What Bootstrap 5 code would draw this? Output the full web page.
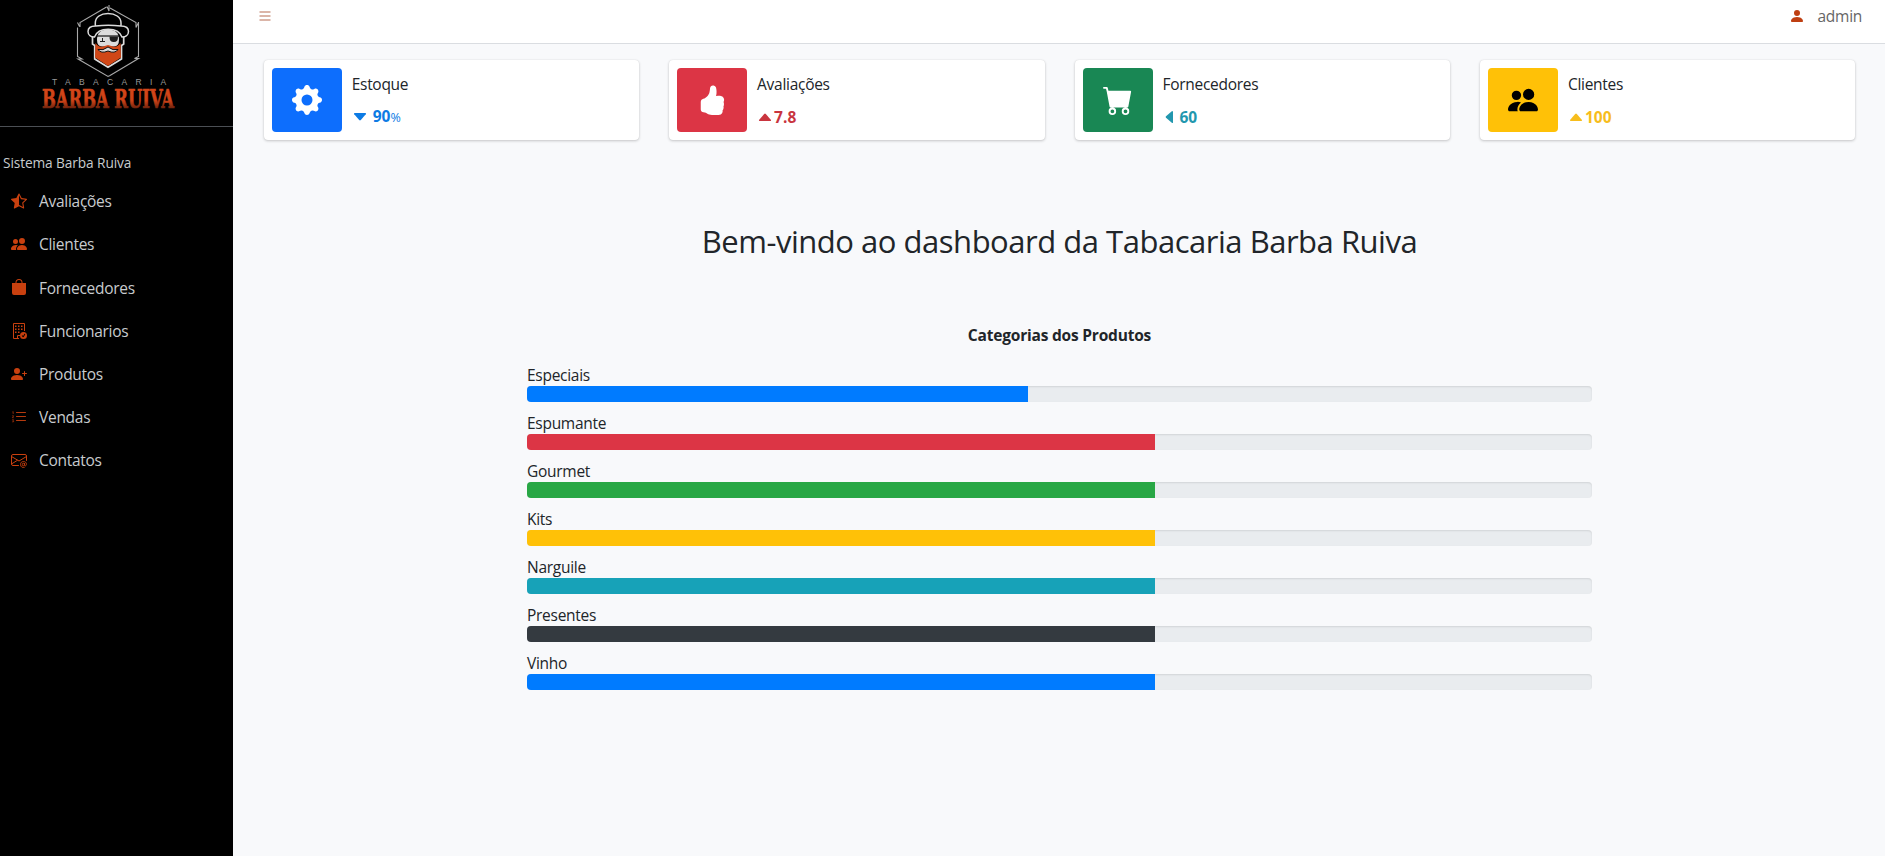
<!DOCTYPE html>
<html lang="pt-BR">
<head>
<meta charset="utf-8">
<meta name="viewport" content="width=device-width, initial-scale=1">
<title>Tabacaria Barba Ruiva</title>
<link href="https://cdn.jsdelivr.net/npm/bootstrap@5.3.0/dist/css/bootstrap.min.css" rel="stylesheet">
<style>
  body { font-family: "Open Sans", "Noto Sans", sans-serif; font-size: 15.5px; line-height: 24px; letter-spacing: -.28px; color: #212529; background: #f8f9fb; }
  .side { width: 233px; background: #000; color: #c8cbce; }
  .brand-box { height: 127px; border-bottom: 1px solid #4b4f54; }
  .side-title { font-size: 13.7px; letter-spacing: -.1px; padding: 24px 0 0 3px; height: 53px; }
  .side-link { height: 43.2px; padding-left: 11px; gap: 12px; color: #c8cbce; }
  .side-link svg { color: #c8400f; margin-top: -1px; }
  .side-link span { margin-top: -.6px; }
  .topbar { height: 44px; border-bottom: 1px solid #dadde1; padding: 4px 23px 0 26px; }
  .topbar .user { color: #666; gap: 13px; }
  .stats { padding: 16px 29.7px 0 30.7px; }
  .stats .row { --bs-gutter-x: 30px; }
  .info { height: 80px; padding: 8px; border-radius: 4px; background: #fff; box-shadow: 0 0 1px rgba(0,0,0,.125), 0 1px 3px rgba(0,0,0,.2); }
  .info-icon { width: 70px; border-radius: 4px; }
  .info-body { padding: 4px 10px 0; }
  .info-num { height: 24px; margin-top: 9px; font-weight: 700; letter-spacing: 0; }
  .info-num small { font-size: 12.5px; font-weight: 400; letter-spacing: -.3px; }
  .c-blue { color: #0d7be4; } .c-red { color: #c9353f; } .c-teal { color: #2297ae; } .c-gold { color: #f7bd1c; }
  .welcome { font-size: 31px; line-height: 38px; letter-spacing: -.48px; margin: 82px 0 0; }
  .cats { width: 1065px; margin-left: 294px; }
  .cats-title { margin: 63px 0 15px; letter-spacing: -.2px; }
  .cat-label { height: 24px; line-height: 27px; }
  .progress { height: 16px; border-radius: 4px; background: #e9ecef; box-shadow: inset 0 1px 2px rgba(0,0,0,.1); margin-bottom: 8px; }
  .bg-b { background: #007bff; } .bg-r { background: #dc3545; } .bg-g { background: #28a745; } .bg-y { background: #ffc107; }
  .bg-t { background: #17a2b8; } .bg-k { background: #343a40; }
</style>
</head>
<body>
<svg width="0" height="0" class="position-absolute" aria-hidden="true">
  <symbol id="people" viewBox="0 0 16 16"><path d="M7 14s-1 0-1-1 1-4 5-4 5 3 5 4-1 1-1 1H7zm4-6a3 3 0 1 0 0-6 3 3 0 0 0 0 6z"/><path d="M5.216 14A2.238 2.238 0 0 1 5 13c0-1.355.68-2.75 1.936-3.72A6.325 6.325 0 0 0 5 9c-4 0-5 3-5 4s1 1 1 1h4.216zM4.5 8a2.5 2.5 0 1 0 0-5 2.5 2.5 0 0 0 0 5z"/></symbol>
</svg>
<div class="d-flex vh-100 overflow-hidden">
  <aside class="side flex-shrink-0">
    <div class="brand-box">
      <svg class="d-block" width="216" height="120" viewBox="0 0 216 120">
        <defs><linearGradient id="fire" x1="0" y1="0" x2="0" y2="1"><stop offset="0" stop-color="#d8481a"/><stop offset=".6" stop-color="#cc4217"/><stop offset=".85" stop-color="#6a220d"/></linearGradient></defs>
        <g fill="none" stroke="#a9a9a9" stroke-width="1.1">
          <path d="M110 8 136 22.500v5M138.500 22v34.500l-4 2h4L110 75.500 108 76.500 78 59h4l-4.500-2.500V27.500M80 27V22.500L106.500 7M109 5v6l-2-4.500M77.500 22.500l2 4M138.500 22.500l-2.500 5"/>
        </g>
        <path d="M92.500 36v8l2.200 1.500V59L108 67.300 121.500 59V45.500l2.200-1.500v-8" fill="#000" stroke="#dcdcdc" stroke-width="1.700"/>
        <path d="M97 40q0-10.500 11-10.500T119 40q0 6-5 6.500h-12Q97 46 97 40z" fill="#dcdcdc"/>
        <g stroke="#dcdcdc" fill="#000" stroke-width="1.500">
          <path d="M95.300 27V23c0-6 5.500-9.500 12.700-9.500S121 17 121 23v4"/>
          <path d="M95.500 26C91 26 88 28 88 31.500c0 3.500 3 5.500 6.500 5.500 2-5.500 7-7.800 13.700-7.800s11.800 2.300 13.800 7.800c3.500 0 6.500-2 6.500-5.500 0-3.500-3-5.500-7.500-5.500-8-.8-17.500-.8-25.500 0z"/>
        </g>
        <path d="M95.500 43q3 4.500 7.500 3.500l5-1.500 5 1.500q4.500 1 7.500-3.500l.5 14.500L108 66 95 57.500z" fill="#d04717"/>
        <path d="M98 49.500q5 1.500 10-2.500 5 4 10 2.500-3 4.500-10 1.500-7 3-10-1.500z" fill="#ddd" stroke="#111"/>
        <path d="M97 36h22" stroke="#111" stroke-width="1.200"/>
        <path d="M109.500 36.500h8.500q.3 5.500-4.200 5.500t-4.300-5.500z" fill="#1c1c1c"/>
        <path d="M100 41.500h5M102.500 38v3" stroke="#222" stroke-width="1" fill="none"/>
        <text x="52" y="85" textLength="114" font-family="Liberation Sans" font-size="8.500" fill="#999">TABACARIA</text>
        <g transform="translate(42 107.500) scale(1 1.450)"><text x="0" y="0" textLength="132" lengthAdjust="spacingAndGlyphs" font-family="DejaVu Serif, serif" font-weight="700" font-size="18.500" letter-spacing="0" fill="url(#fire)" stroke="url(#fire)" stroke-width=".5">BARBA RUIVA</text></g>
      </svg>
    </div>
    <div class="side-title">Sistema Barba Ruiva</div>
    <nav class="nav flex-column">
      <a class="side-link d-flex align-items-center text-decoration-none" href="#"><svg width="16" height="16" viewBox="0 0 16 16" fill="currentColor"><path d="M5.354 5.119 7.538.792A.516.516 0 0 1 8 .5c.183 0 .366.097.465.292l2.184 4.327 4.898.696A.537.537 0 0 1 16 6.320a.548.548 0 0 1-.17.445l-3.523 3.356.83 4.730c.078.443-.36.79-.746.592L8 13.187l-4.389 2.256a.52.52 0 0 1-.146.05c-.342.06-.668-.254-.6-.642l.83-4.730L.173 6.765a.55.55 0 0 1-.172-.403.58.58 0 0 1 .085-.302.513.513 0 0 1 .37-.245l4.898-.696zM8 12.027a.5.5 0 0 1 .232.056l3.686 1.894-.694-3.957a.565.565 0 0 1 .162-.505l2.907-2.770-4.052-.576a.525.525 0 0 1-.393-.288L8.001 2.223 8 2.226v9.800z"/></svg><span>Avaliações</span></a>
      <a class="side-link d-flex align-items-center text-decoration-none" href="#"><svg width="16" height="16" fill="currentColor"><use href="#people"/></svg><span>Clientes</span></a>
      <a class="side-link d-flex align-items-center text-decoration-none" href="#"><svg width="16" height="16" viewBox="0 0 16 16" fill="currentColor"><path d="M8 1a2.500 2.500 0 0 1 2.500 2.500V4h-5v-.5A2.500 2.500 0 0 1 8 1zm3.500 3v-.5a3.500 3.500 0 1 0-7 0V4H1v10a2 2 0 0 0 2 2h10a2 2 0 0 0 2-2V4h-3.500z"/></svg><span>Fornecedores</span></a>
      <a class="side-link d-flex align-items-center text-decoration-none" href="#"><svg width="16" height="16" viewBox="0 0 16 16" fill="currentColor"><path fill="none" stroke="currentColor" d="M8 15.500H2.500V.5h11V8M6.500 15v-2.500H9"/><path d="M4 2.500h1.500V4H4zM7 2.500h1.500V4H7zM10 2.500h1.500V4H10zM4 5.500h1.500V7H4zM7 5.500h1.500V7H7zM10 5.500h1.500V7H10zM4 8.500h1.500V10H4zM7 8.500h1.500V10H7z"/><path d="M12.500 16a3.500 3.500 0 1 0 0-7 3.500 3.500 0 0 0 0 7Zm1.679-4.493-1.335 2.226a.75.75 0 0 1-1.174.144l-.774-.773a.5.5 0 0 1 .708-.708l.547.548 1.170-1.951a.5.5 0 1 1 .858.514Z"/></svg><span>Funcionarios</span></a>
      <a class="side-link d-flex align-items-center text-decoration-none" href="#"><svg width="16" height="16" viewBox="0 0 16 16" fill="currentColor"><path d="M1 14s-1 0-1-1 1-4 6-4 6 3 6 4-1 1-1 1H1zm5-6a3 3 0 1 0 0-6 3 3 0 0 0 0 6z"/><path d="M13.500 5a.5.5 0 0 1 .5.5V7h1.500a.5.5 0 0 1 0 1H14v1.500a.5.5 0 0 1-1 0V8h-1.500a.5.5 0 0 1 0-1H13V5.500a.5.5 0 0 1 .5-.5z"/></svg><span>Produtos</span></a>
      <a class="side-link d-flex align-items-center text-decoration-none" href="#"><svg width="16" height="16" viewBox="0 0 16 16" fill="none" stroke="currentColor"><path stroke-linecap="round" d="M5.500 3.500h9M5.500 7.500h9M5.500 11.500h9" opacity=".9"/><path stroke-width=".6" d="M1.400 3 2.200 2.600V5M1.200 6.900Q2 6 2.700 6.900L1.300 8.700h1.500M1.200 10.800q.8-.8 1.400 0-.2.8-.8.9.9.2.9.9-.7.9-1.600 0"/></svg><span>Vendas</span></a>
      <a class="side-link d-flex align-items-center text-decoration-none" href="#"><svg width="16" height="16" viewBox="0 0 16 16" fill="none" stroke="currentColor"><path stroke-linecap="round" d="M7.500 13.500H2A1.500 1.500 0 0 1 .5 12V4A1.500 1.500 0 0 1 2 2.500h12A1.500 1.500 0 0 1 15.500 4v4.500M.5 4.500 8 9l7.500-4.500M.8 11.800l5.500-3.400"/><path stroke-width=".9" d="M13.700 15.300c-2 .7-4.200-.3-4.200-2.800 0-2 1.300-3 3-3s2.900 1.100 2.900 2.700c0 2-1.900 2.200-1.900.6v-1.700M13.500 12.500a1.100 1.300 0 1 1-2.200 0 1.100 1.300 0 0 1 2.200 0"/></svg><span>Contatos</span></a>
    </nav>
  </aside>
  <main class="flex-grow-1">
    <header class="topbar bg-white d-flex justify-content-between align-items-start">
      <svg width="12" height="24" viewBox="0 0 12 24" stroke="#dbb5a8" stroke-width="2"><path d="M.5 8h11M.5 12h11M.5 16h11"/></svg>
      <div class="user d-flex"><svg width="16" height="16" viewBox="0 0 16 16" fill="#bf3f12" class="mt-1"><path d="M3 14s-1 0-1-1 1-4 6-4 6 3 6 4-1 1-1 1H3Zm5-6a3 3 0 1 0 0-6 3 3 0 0 0 0 6Z"/></svg><span>admin</span></div>
    </header>
    <section class="stats">
      <div class="row">
        <div class="col-3"><div class="info d-flex">
          <div class="info-icon bg-primary d-flex align-items-center justify-content-center"><svg width="30" height="30" viewBox="0 0 16 16" fill="#fff"><path d="M9.405 1.050c-.413-1.400-2.397-1.400-2.810 0l-.1.340a1.464 1.464 0 0 1-2.105.872l-.31-.17c-1.283-.698-2.686.705-1.987 1.987l.169.311c.446.820.023 1.841-.872 2.105l-.34.1c-1.400.413-1.400 2.397 0 2.810l.34.1a1.464 1.464 0 0 1 .872 2.105l-.17.310c-.698 1.283.705 2.686 1.987 1.987l.311-.169a1.464 1.464 0 0 1 2.105.872l.1.340c.413 1.400 2.397 1.400 2.810 0l.1-.34a1.464 1.464 0 0 1 2.105-.872l.31.170c1.283.698 2.686-.705 1.987-1.987l-.169-.311a1.464 1.464 0 0 1 .872-2.105l.34-.1c1.400-.413 1.400-2.397 0-2.810l-.34-.1a1.464 1.464 0 0 1-.872-2.105l.17-.31c.698-1.283-.705-2.686-1.987-1.987l-.311.169a1.464 1.464 0 0 1-2.105-.872l-.1-.34zM8 10.930a2.929 2.929 0 1 1 0-5.860 2.929 2.929 0 0 1 0 5.858z"/></svg></div>
          <div class="info-body"><div>Estoque</div><div class="info-num d-flex align-items-center c-blue"><svg width="21" height="16" fill="currentColor"><path d="M2.500 4h11q1 .3.300 1.200L8.800 11q-.8.800-1.600 0l-5-5.800Q1.600 4.300 2.500 4z"/></svg><span>90<small>%</small></span></div></div>
        </div></div>
        <div class="col-3"><div class="info d-flex">
          <div class="info-icon bg-danger d-flex align-items-center justify-content-center"><svg width="30" height="30" viewBox="0 0 16 16" fill="#fff"><path d="M6.956 1.745C7.021.810 7.908.087 8.864.325l.261.066c.463.116.874.456 1.012.965.220.816.533 2.511.062 4.510a9.840 9.840 0 0 1 .443-.051c.713-.065 1.669-.072 2.516.210.518.173.994.681 1.200 1.273.184.532.160 1.162-.234 1.733.058.119.103.242.138.363.077.270.113.567.113.856 0 .289-.036.586-.113.856-.039.135-.09.273-.16.404.169.387.107.819-.003 1.148a3.163 3.163 0 0 1-.488.901c.054.152.076.312.076.465 0 .305-.089.625-.253.912C13.100 15.522 12.437 16 11.500 16H8c-.605 0-1.070-.081-1.466-.218a4.820 4.820 0 0 1-.97-.484l-.048-.03c-.504-.307-.999-.609-2.068-.722C2.682 14.464 2 13.846 2 13V9c0-.85.685-1.432 1.357-1.615.849-.232 1.574-.787 2.132-1.410.56-.627.914-1.280 1.039-1.639.199-.575.356-1.539.428-2.590z"/></svg></div>
          <div class="info-body"><div>Avaliações</div><div class="info-num d-flex align-items-center c-red"><svg width="17" height="16" fill="currentColor"><path d="M2.500 12h11q1-.3.300-1.200L8.800 5q-.8-.8-1.600 0l-5 5.800Q1.600 11.700 2.500 12z"/></svg><span>7.8</span></div></div>
        </div></div>
        <div class="col-3"><div class="info d-flex">
          <div class="info-icon bg-success d-flex align-items-center justify-content-center"><svg width="30" height="30" viewBox="0 0 16 16" fill="#fff"><path d="M0 1.500A.5.5 0 0 1 .5 1H2a.5.5 0 0 1 .485.379L2.890 3H14.500a.5.5 0 0 1 .491.592l-1.500 8A.5.5 0 0 1 13 12H4a.5.5 0 0 1-.491-.408L2.010 3.607 1.610 2H.5a.5.5 0 0 1-.5-.5zM5 12a2 2 0 1 0 0 4 2 2 0 0 0 0-4zm7 0a2 2 0 1 0 0 4 2 2 0 0 0 0-4zm-7 1a1 1 0 1 1 0 2 1 1 0 0 1 0-2zm7 0a1 1 0 1 1 0 2 1 1 0 0 1 0-2z"/></svg></div>
          <div class="info-body"><div>Fornecedores</div><div class="info-num d-flex align-items-center c-teal"><svg width="17" height="16" fill="currentColor"><path d="M10 2.500v11q-.3 1-1.200.3L3 8.800q-.8-.8 0-1.600l5.800-5Q9.700 1.600 10 2.500z"/></svg><span>60</span></div></div>
        </div></div>
        <div class="col-3"><div class="info d-flex">
          <div class="info-icon bg-warning d-flex align-items-center justify-content-center"><svg width="30" height="30" fill="#000"><use href="#people"/></svg></div>
          <div class="info-body"><div>Clientes</div><div class="info-num d-flex align-items-center c-gold"><svg width="17" height="16" fill="currentColor"><path d="M2.500 12h11q1-.3.300-1.200L8.800 5q-.8-.8-1.600 0l-5 5.800Q1.600 11.700 2.500 12z"/></svg><span>100</span></div></div>
        </div></div>
      </div>
    </section>
    <section class="cats">
      <h2 class="welcome text-center text-nowrap fw-normal">Bem-vindo ao dashboard da Tabacaria Barba Ruiva</h2>
      <p class="cats-title text-center fw-bold">Categorias dos Produtos</p>
      <div class="cat-label">Especiais</div><div class="progress"><div class="progress-bar bg-b" style="width:47%"></div></div>
      <div class="cat-label">Espumante</div><div class="progress"><div class="progress-bar bg-r" style="width:59%"></div></div>
      <div class="cat-label">Gourmet</div><div class="progress"><div class="progress-bar bg-g" style="width:59%"></div></div>
      <div class="cat-label">Kits</div><div class="progress"><div class="progress-bar bg-y" style="width:59%"></div></div>
      <div class="cat-label">Narguile</div><div class="progress"><div class="progress-bar bg-t" style="width:59%"></div></div>
      <div class="cat-label">Presentes</div><div class="progress"><div class="progress-bar bg-k" style="width:59%"></div></div>
      <div class="cat-label">Vinho</div><div class="progress"><div class="progress-bar bg-b" style="width:59%"></div></div>
    </section>
  </main>
</div>
<script src="https://cdn.jsdelivr.net/npm/bootstrap@5.3.0/dist/js/bootstrap.bundle.min.js"></script>
</body>
</html>
